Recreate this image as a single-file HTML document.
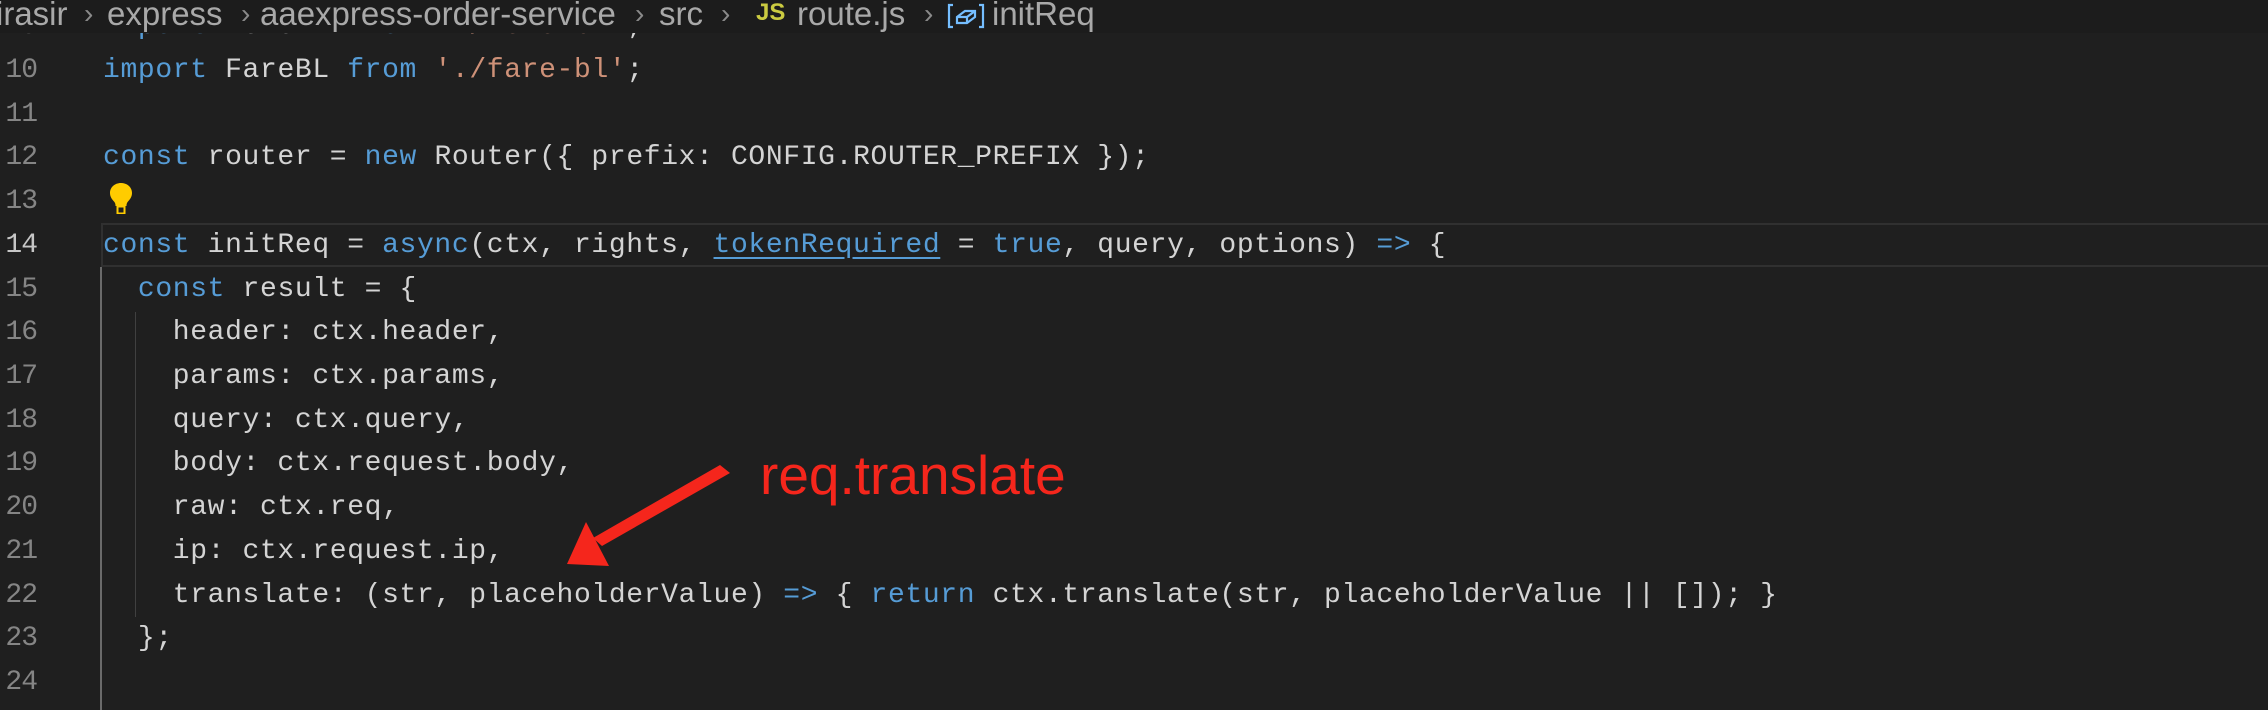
<!DOCTYPE html>
<html><head><meta charset="utf-8"><style>
html,body{margin:0;padding:0;}
body{width:2268px;height:710px;background:#1f1f1f;position:relative;overflow:hidden;font-family:"Liberation Mono",monospace;}
.ln{position:absolute;left:0;width:37px;text-align:right;color:#858585;font-size:28px;line-height:44px;height:44px;letter-spacing:-1px;}
.cl{position:absolute;left:103px;color:#d4d4d4;font-size:28px;line-height:44px;height:44px;white-space:pre;letter-spacing:0.64px;}
.k{color:#569cd6}.s{color:#ce9178}
.bc{position:absolute;top:0;left:0;width:2268px;height:33px;background:#1c1c1c;font-family:"Liberation Sans",sans-serif;font-size:33px;color:#a9a9a9;overflow:hidden;}
.bc span{position:absolute;top:-6px;line-height:40px;white-space:nowrap;}
.ch{color:#8a8a8a;font-size:28px;}
</style></head><body>
<div class="ln" style="top:5px">9</div>
<div class="cl" style="top:5px"><span class="k">import</span> ZoneBL <span class="k">from</span> <span class="s">'./zone-bl'</span>;</div>
<div class="ln" style="top:49px">10</div>
<div class="cl" style="top:49px"><span class="k">import</span> FareBL <span class="k">from</span> <span class="s">'./fare-bl'</span>;</div>
<div class="ln" style="top:93px">11</div>
<div class="ln" style="top:136px">12</div>
<div class="cl" style="top:136px"><span class="k">const</span> router = <span class="k">new</span> Router({ prefix: CONFIG.ROUTER_PREFIX });</div>
<div class="ln" style="top:180px">13</div>
<div style="position:absolute;left:101px;top:223px;width:2170px;height:40px;border:2px solid #303030;"></div>
<div class="ln" style="top:224px;color:#c6c6c6">14</div>
<div class="cl" style="top:224px"><span class="k">const</span> initReq = <span class="k">async</span>(ctx, rights, <span class="k" style="text-decoration:underline;text-underline-offset:5px">tokenRequired</span> = <span class="k">true</span>, query, options) <span class="k">=&gt;</span> {</div>
<div class="ln" style="top:268px">15</div>
<div class="cl" style="top:268px">  <span class="k">const</span> result = {</div>
<div class="ln" style="top:311px">16</div>
<div class="cl" style="top:311px">    header: ctx.header,</div>
<div class="ln" style="top:355px">17</div>
<div class="cl" style="top:355px">    params: ctx.params,</div>
<div class="ln" style="top:399px">18</div>
<div class="cl" style="top:399px">    query: ctx.query,</div>
<div class="ln" style="top:442px">19</div>
<div class="cl" style="top:442px">    body: ctx.request.body,</div>
<div class="ln" style="top:486px">20</div>
<div class="cl" style="top:486px">    raw: ctx.req,</div>
<div class="ln" style="top:530px">21</div>
<div class="cl" style="top:530px">    ip: ctx.request.ip,</div>
<div class="ln" style="top:574px">22</div>
<div class="cl" style="top:574px">    translate: (str, placeholderValue) <span class="k">=&gt;</span> { <span class="k">return</span> ctx.translate(str, placeholderValue || []); }</div>
<div class="ln" style="top:617px">23</div>
<div class="cl" style="top:617px">  };</div>
<div class="ln" style="top:661px">24</div>
<div style="position:absolute;left:100px;top:267px;width:2px;height:443px;background:#6a6a6a"></div>
<div style="position:absolute;left:135px;top:312px;width:1px;height:305px;background:#404040"></div>
<svg style="position:absolute;left:108px;top:182px" width="26" height="34" viewBox="0 0 26 34">
<path d="M13 1C6.5 1 2 5.5 2 11c0 4 2.2 6.5 4 8.5 1 1.2 1.5 2.5 1.5 4V24h11v-.5c0-1.5.5-2.8 1.5-4 1.8-2 4-4.5 4-8.5C24 5.5 19.5 1 13 1z" fill="#ffcc00"/>
<rect x="8.5" y="24" width="9" height="8" fill="#ffcc00"/><rect x="10.5" y="25.5" width="5" height="5" fill="#1f1f1f"/>
</svg>
<div class="bc">
<span style="left:-4px">irasir</span>
<span class="ch" style="left:84px">&#x203A;</span>
<span style="left:107px">express</span>
<span class="ch" style="left:241px">&#x203A;</span>
<span style="left:260px">aaexpress-order-service</span>
<span class="ch" style="left:635px">&#x203A;</span>
<span style="left:659px">src</span>
<span class="ch" style="left:721px">&#x203A;</span>
<span style="left:756px;color:#cbcb41;font-size:24px;font-weight:bold;top:-7px">JS</span>
<span style="left:797px">route.js</span>
<span class="ch" style="left:924px">&#x203A;</span>
<svg style="position:absolute;left:947px;top:3px" width="38" height="26" viewBox="0 0 38 26" fill="none" stroke="#75beff" stroke-width="2.2">
<path d="M6 2H2v22h4M32 2h4v22h-4"/>
<path d="M10 14l8-6h10v6l-8 6H10z M10 14h10l8-6 M20 14v6"/>
</svg>
<span style="left:992px">initReq</span>
</div>
<div style="position:absolute;left:760px;top:440px;font-family:'Liberation Sans',sans-serif;font-size:55px;line-height:70px;color:#f5261c;white-space:nowrap;">req.translate</div>
<svg style="position:absolute;left:0;top:0" width="2268" height="710">
<polygon points="720,465 730,473 602,546 593,538" fill="#f5261c"/>
<polygon points="567,564 586,522 609,566" fill="#f5261c"/>
</svg>
</body></html>
